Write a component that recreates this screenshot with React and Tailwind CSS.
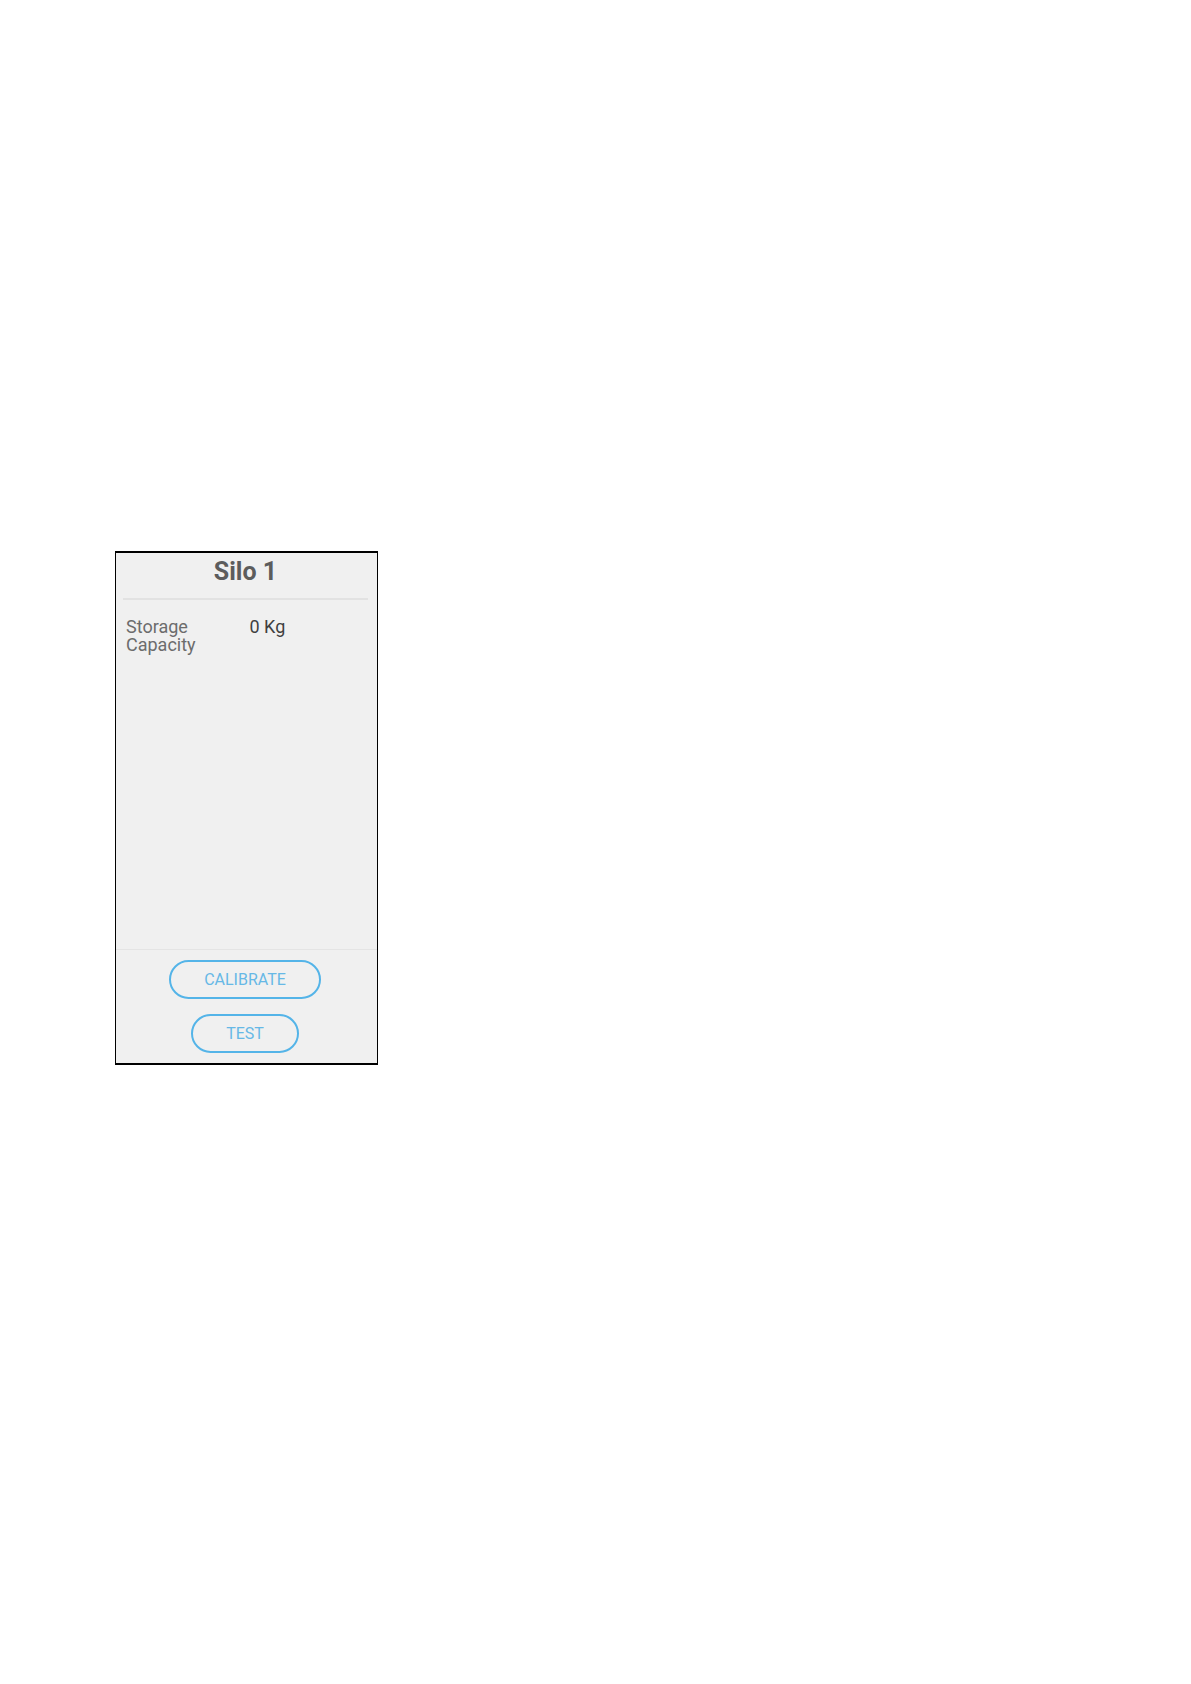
const settings = [{ label: "Storage Capacity", value: "0 Kg" }];

const pillButton =
  "h-[39px] px-[33px] rounded-full border-2 border-[#54b4e8] text-[16px] leading-5 text-[#66b8e6]";

export default function App() {
  return (
    <main className="min-h-screen bg-white px-[115px] pt-[551px] font-['Roboto','Liberation_Sans',sans-serif]">

      {/* SILO CARD */}
      <section className="flex flex-col w-full max-w-[263px] min-h-[514px] bg-[#f0f0f0] border-x border-y-2 border-black">

        <h1 className="ml-[7px] mr-[9px] pt-1 pb-3 text-center text-[25px] leading-[29px] font-bold text-[#5c5c5c] border-b-2 border-[#e2e2e2]">
          Silo 1
        </h1>

        <dl className="flex-1 px-[10px] pt-[18px] text-[18px] leading-[18px]">
          {settings.map((item) => (
            <div key={item.label} className="grid grid-cols-2">
              <dt className="pr-4 text-[#6c6c6c]">{item.label}</dt>
              <dd className="pl-[3px] text-[#404040]">{item.value}</dd>
            </div>
          ))}
        </dl>

        {/* ACTIONS */}
        <footer className="flex flex-col items-center gap-[15px] pt-[10px] pb-[10px] pr-[3px] border-t border-[#e4e4e4]">
          <button type="button" className={pillButton}>
            CALIBRATE
          </button>
          <button type="button" className={pillButton}>
            TEST
          </button>
        </footer>

      </section>

    </main>
  );
}
